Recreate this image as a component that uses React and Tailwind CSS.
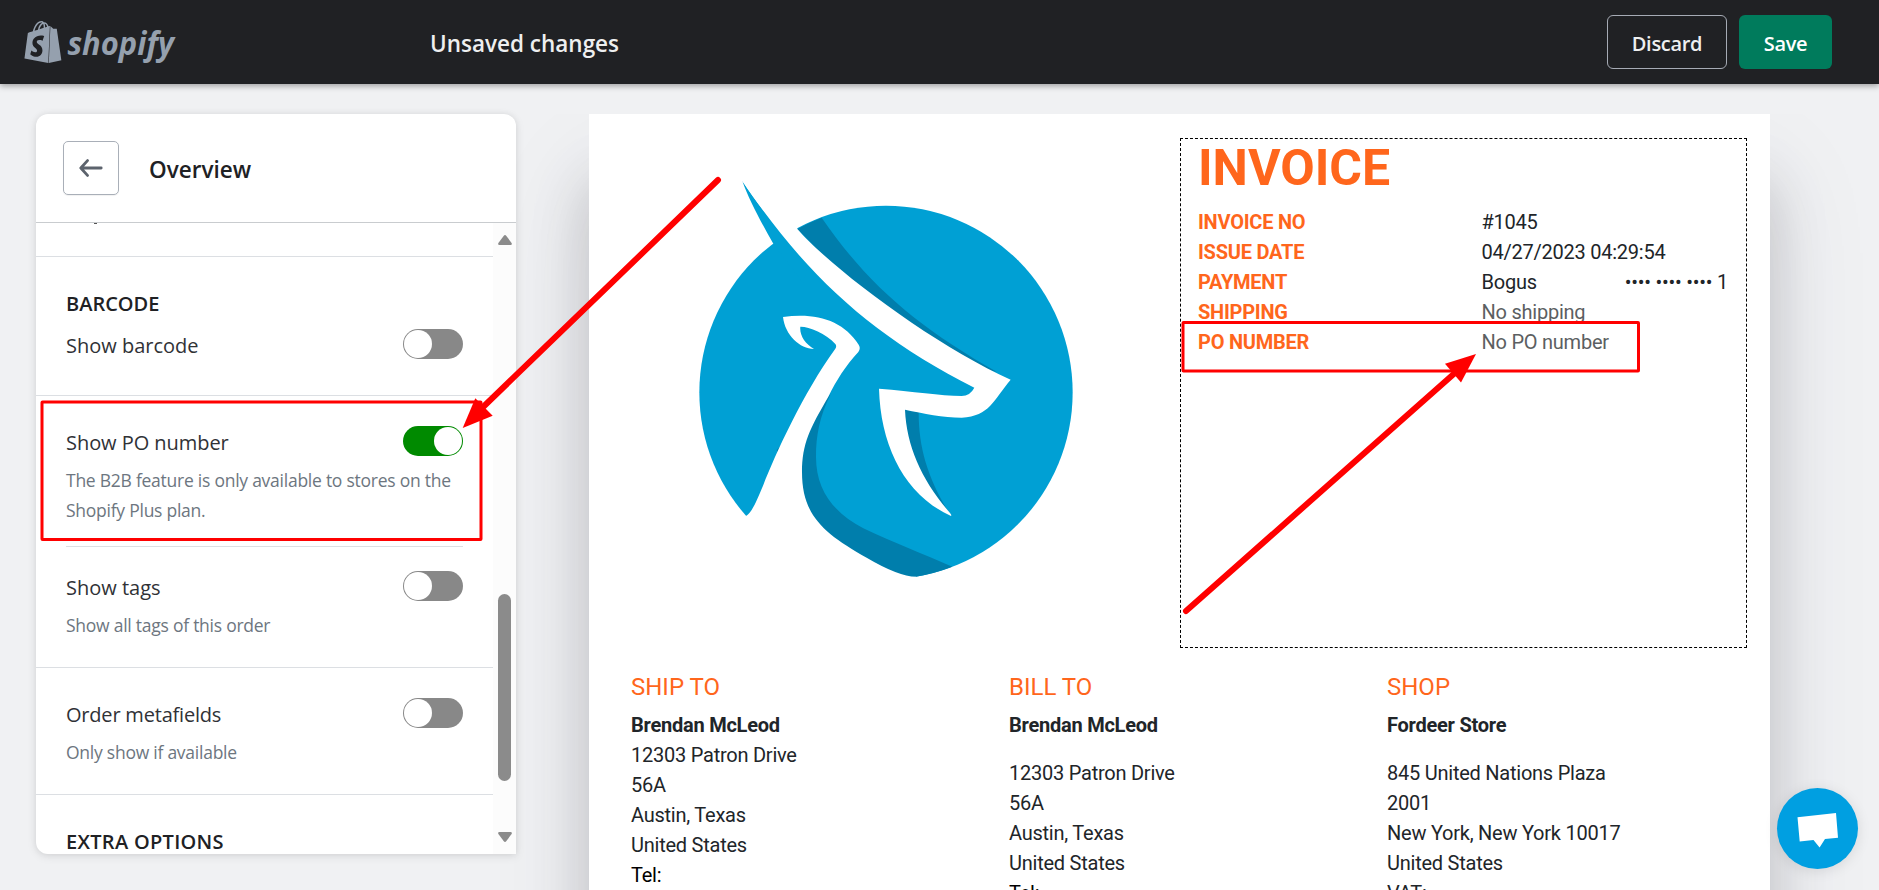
import React from "react";
import { SiShopify } from "react-icons/si";

function Toggle({ on = false }) {
  return (
    <span
      className={
        "flex h-[30px] w-[60px] shrink-0 items-center rounded-full px-px " +
        (on ? "justify-end bg-[#008a00]" : "justify-start bg-[#888888]")
      }
    >
      <span className="size-[28px] rounded-full bg-white" />
    </span>
  );
}

function Option({ label, labelClass = "", children, on }) {
  return (
    <div>
      <div className="flex h-[30px] items-start justify-between">
        <span className={"mt-[2px] text-[20px] leading-[30px] whitespace-nowrap text-[#303236] " + labelClass}>{label}</span>
        <Toggle on={on} />
      </div>
      {children && <p className="mt-[9px] text-[17.5px] leading-[30px] tracking-[-0.25px] text-[#6d7680]">{children}</p>}
    </div>
  );
}

function SidePanel() {
  return (
    <aside className="z-10 flex h-[740px] w-[480px] shrink-0 flex-col overflow-hidden rounded-t-[12px] rounded-bl-[12px] bg-white shadow-[0_0_6px_rgba(23,24,24,0.05),0_2px_10px_rgba(0,0,0,0.1)]">
      <div className="flex h-[109px] shrink-0 items-start border-b border-[#c9cccf] pt-[27px] pl-[27px]">
        <button className="flex h-[54px] w-[56px] items-center justify-center rounded-[5px] border border-[#a9afb8] shadow-[0_1px_1px_rgba(0,0,0,0.06)]">
          <svg width="24" height="18" viewBox="0 0 24 18" fill="none" stroke="#5c636d" strokeWidth="2.8" strokeLinecap="round" strokeLinejoin="round">
            <path d="M22.2 9H2M8.5 1.6L1.8 9L8.5 16.4" />
          </svg>
        </button>
        <h2 className="mt-[11px] ml-[30px] text-[22.5px] leading-[36px] font-semibold text-[#202124]">Overview</h2>
      </div>
      <div className="flex min-h-0 flex-1">
        <div className="flex w-[457px] flex-col overflow-hidden">
          <div className="h-[34px] shrink-0 border-b border-[#dcdfe3] pl-[58px]">
            <span className="block h-px w-[3px] bg-[#555]" />
          </div>
          <section className="h-[139px] shrink-0 border-b border-[#dcdfe3] px-[30px] pt-[32px]">
            <h3 className="mb-[10px] text-[20px] leading-[30px] font-semibold text-[#202124]">BARCODE</h3>
            <Option label="Show barcode" />
          </section>
          <section className="h-[272px] shrink-0 border-b border-[#dcdfe3] px-[30px] pt-[30px]">
            <div className="h-[121px] border-b border-[#dcdfe3]">
              <Option label="Show PO number" labelClass="tracking-[-0.05px]" on>
                The B2B feature is only available to stores on the Shopify Plus plan.
              </Option>
            </div>
            <div className="pt-6">
              <Option label="Show tags">Show all tags of this order</Option>
            </div>
          </section>
          <section className="h-[127px] shrink-0 border-b border-[#dcdfe3] px-[30px] pt-[30px]">
            <Option label="Order metafields" labelClass="tracking-[-0.2px]">Only show if available</Option>
          </section>
          <section className="px-[30px] pt-[32px]">
            <h3 className="text-[20px] leading-[30px] font-semibold tracking-[0.3px] whitespace-nowrap text-[#202124]">EXTRA OPTIONS</h3>
          </section>
        </div>
        <div className="flex w-[23px] flex-col items-center bg-[#fcfcfc] pt-[12px]">
          <svg width="14" height="10" viewBox="0 0 14 10" fill="#8b8b8b"><path d="M5.6 1Q7-.8 8.4 1L13.6 8Q14.4 10 12.6 10H1.4Q-.4 10 .4 8Z" /></svg>
          <div className="mt-[349px] h-[187px] w-[13px] rounded-full bg-[#8b8b8b]" />
          <svg className="mt-[51px]" width="14" height="10" viewBox="0 0 14 10" fill="#8b8b8b"><path d="M5.6 9Q7 10.8 8.4 9L13.6 2Q14.4 0 12.6 0H1.4Q-.4 0 .4 2Z" /></svg>
        </div>
      </div>
    </aside>
  );
}

function DeerLogo() {
  return (
    <svg className="size-[450px]" viewBox="0 0 1350 1350">
      <circle cx="678" cy="727" r="560" fill="#00a0d4" />
      <path fill="#00a0d4" d="M247 93C265 145 305 220 340 281L430 400L450 330C380 265 310 190 247 93Z" />
      <g fill="#007eac">
        <path d="M412 237Q448 217 485 203C620 400 770 530 1010 665L900 650L600 430Z" />
        <path d="M512 732C478 800 468 860 468 920C468 1020 520 1087 610 1135C700 1178 790 1212 877 1250A560 560 0 0 1 768 1280L500 1290L350 900Z" />
        <path d="M735 779L776 786C776 900 806 990 873 1098L730 900Z" />
      </g>
      <g fill="#fff">
        <path d="M247 93C440 380 640 560 943 713Q930 738 905 738C840 737 760 724 657 716C662 890 735 1035 873 1098C875 1095 873 1093 870 1089C785 990 740 890 735 779C790 790 850 803 905 803C990 798 1000 750 1052 689C830 590 520 360 412 237L390 90Z" />
        <path d="M258 1098C275 1090 292 1048 310 1005C345 915 430 728 526 596Q531 588 526 582C498 550 445 529 421 530C418 555 435 582 462 597C420 597 375 555 369 501C470 487 550 512 596 584Q603 595 595 606C556 648 530 690 505 740C450 835 426 880 426 967C426 1095 490 1150 620 1223Q715 1279 768 1280L768 1345H150V1098Z" />
      </g>
    </svg>
  );
}

const details = [
  ["INVOICE NO", "#1045"],
  ["ISSUE DATE", "04/27/2023 04:29:54"],
  ["PAYMENT", "Bogus", "•••• •••• •••• 1"],
  ["SHIPPING", "No shipping"],
  ["PO NUMBER", "No PO number"],
];

const parties = [
  { title: "SHIP TO", name: "Brendan McLeod", lines: ["12303 Patron Drive", "56A", "Austin, Texas", "United States", "Tel:"] },
  { title: "BILL TO", name: "Brendan McLeod", gap: true, lines: ["12303 Patron Drive", "56A", "Austin, Texas", "United States", "Tel:"] },
  { title: "SHOP", name: "Fordeer Store", gap: true, lines: ["845 United Nations Plaza", "2001", "New York, New York 10017", "United States", "VAT:"] },
];

function Invoice() {
  return (
    <article className="flex h-[1400px] w-[1181px] shrink-0 flex-col bg-white font-['Roboto',sans-serif] text-[20px] leading-[30px] tracking-[-0.24px] text-[#212529] shadow-[0_60px_100px_rgba(50,50,93,0.1),0_70px_54px_rgba(0,0,0,0.17)]">
      <div className="flex h-[534px] shrink-0 pt-6">
        <div className="flex w-[591px] justify-start pt-3 pl-[71px]">
          <DeerLogo />
        </div>
        <div className="h-[510px] w-[567px] border border-dashed border-black pr-[18px] pl-[17px]">
          <h1 className="-mt-px text-[50px] leading-[60px] font-bold tracking-normal text-[#ff661c]">INVOICE</h1>
          <div className="mt-[9px]">
            {details.map(([label, value, extra], i) => (
              <div key={label} className="flex h-[30px]">
                <span className="w-[283.5px] shrink-0 font-bold text-[#ff661c]">{label}</span>
                <span className={i > 2 ? "text-[#5c5f62]" : ""}>{value}</span>
                {extra && <span className="ml-auto whitespace-nowrap">{extra}</span>}
              </div>
            ))}
          </div>
        </div>
      </div>
      <div className="flex pt-[21px] pl-[42px]">
        {parties.map((p) => (
          <section key={p.title} className="w-[378px]">
            <h2 className="mb-[5px] text-[24px] leading-[36px] tracking-normal text-[#ff661c]">{p.title}</h2>
            <p className={"font-bold " + (p.gap ? "mb-[18px]" : "")}>{p.name}</p>
            {p.lines.map((l) => (
              <p key={l} className={l === "Tel:" ? "text-black" : ""}>{l}</p>
            ))}
          </section>
        ))}
      </div>
    </article>
  );
}

function Annotations() {
  return (
    <svg className="pointer-events-none absolute inset-0 z-20" width="1879" height="890" viewBox="0 0 1879 890" fill="none" stroke="#ff0000">
      <rect x="42" y="402" width="439" height="137.5" rx="0.5" strokeWidth="3" />
      <rect x="1183" y="322.5" width="455.5" height="48.5" rx="0.5" strokeWidth="3" />
      <path d="M718 180L480 410" strokeWidth="6" strokeLinecap="round" />
      <path d="M462.7 428L475.3 398.3L492.7 415.7Z" fill="#ff0000" stroke="none" />
      <path d="M1186 611L1456 372" strokeWidth="6" strokeLinecap="round" />
      <path d="M1476 354L1445 363.7L1461 382.5Z" fill="#ff0000" stroke="none" />
    </svg>
  );
}

export default function App() {
  return (
    <div className="relative flex h-[890px] w-[1879px] flex-col overflow-hidden bg-[#f0f1f3] font-['Open_Sans','Noto_Sans',sans-serif]">
      <header className="z-10 flex h-[84px] shrink-0 items-start bg-[#202124] shadow-[0_2px_6px_rgba(0,0,0,0.35)]">
        <div className="flex w-[430px] items-start pt-[21px] pl-[21.5px] text-[#95a0ae]">
          <SiShopify size={42} />
          <svg width="114" height="46" viewBox="0 0 114 46" fill="currentColor">
            <text x="3.5" y="34" textLength="106.5" lengthAdjust="spacingAndGlyphs" fontSize="32" fontWeight="700" fontStyle="italic" fontFamily="Open Sans">shopify</text>
          </svg>
        </div>
        <div className="mt-[26px] text-[22.5px] leading-[36px] font-semibold text-[#eeeff0]">Unsaved changes</div>
        <div className="mt-[15px] mr-[47px] ml-auto flex gap-3 text-[20px] font-semibold tracking-[-0.3px]">
          <button className="h-[54px] w-[120px] rounded-[6px] border border-[#a6abb5] pt-[3px] text-[#eeeff0]">Discard</button>
          <button className="h-[54px] w-[93px] rounded-[6px] bg-[#007b5c] pt-[3px] text-white">Save</button>
        </div>
      </header>
      <main className="flex min-h-0 flex-1 pt-[30px] pl-[36px]">
        <SidePanel />
        <div className="-ml-4 flex min-w-0 flex-1 overflow-hidden pl-[89px]">
          <Invoice />
        </div>
      </main>
      <button className="absolute top-[788px] left-[1777px] z-10 size-[81px] rounded-full bg-[#009fe1] shadow-[0_2px_14px_rgba(0,0,0,0.1)]">
        <svg width="81" height="81" viewBox="0 0 81 81" fill="#fff">
          <path d="M20.5 29.2L59 25L61 49.8L48 51L42.6 59.5L36.5 52L22.7 53.5Z" />
        </svg>
      </button>
      <Annotations />
    </div>
  );
}
